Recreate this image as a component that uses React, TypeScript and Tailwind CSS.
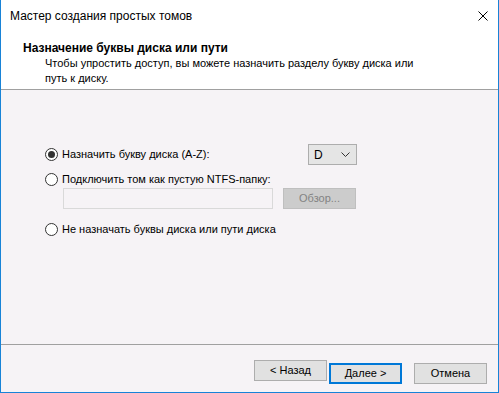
const font = { fontFamily: '"Segoe UI", "Liberation Sans", Arial, sans-serif' }

const Radio = ({ checked, label }: { checked?: boolean; label: string }) => (
  <div className="flex items-center h-[16px]">
    <span className="w-[13px] h-[13px] rounded-full border border-[#333] bg-white flex items-center justify-center">
      {checked && <span className="w-[7px] h-[7px] rounded-full bg-[#333]" />}
    </span>
    <span className="ml-[4px] text-[11px] text-black leading-none">{label}</span>
  </div>
)

const Button = ({ label, primary }: { label: string; primary?: boolean }) => (
  <button
    className={`w-[73px] h-[21px] bg-[#e1e1e1] text-[11px] text-black leading-none ${
      primary ? 'border-2 border-[#0078d7]' : 'border border-[#adadad]'
    }`}
  >
    {label}
  </button>
)

export default function App() {
  return (
    <div
      className="w-[499px] h-[393px] flex flex-col border-x border-b border-[#1883d7] bg-[#f6f3f6] overflow-hidden"
      style={font}
    >
      <div className="bg-white h-[90px] border-b border-[#a0a0a0] flex flex-col">
        <div className="h-[31px] flex items-center justify-between pl-[9px] pr-[9px]">
          <span className="text-[12px] text-black">Мастер создания простых томов</span>
          <svg width="10" height="10" viewBox="0 0 10 10" className="mr-[1px]">
            <path d="M0.5 0.5 L9.5 9.5 M9.5 0.5 L0.5 9.5" stroke="#000" strokeWidth="1" />
          </svg>
        </div>
        <div className="pl-[22px] mt-[10px] text-[12px] font-bold text-black leading-[14px]">
          Назначение буквы диска или пути
        </div>
        <div className="pl-[44px] mt-[1px] text-[11px] text-black leading-[15px]">
          Чтобы упростить доступ, вы можете назначить разделу букву диска или
          <br />
          путь к диску.
        </div>
      </div>

      <div className="flex-1 border-b border-[#a0a0a0] pl-[44px] pt-[54px]">
        <div className="flex items-center">
          <div className="w-[263px]">
            <Radio checked label="Назначить букву диска (A-Z):" />
          </div>
          <div className="w-[49px] h-[21px] border border-[#adadad] bg-[#e5e5e5] flex items-center justify-between pl-[5px] pr-[6px]">
            <span className="text-[12px] text-black leading-none">D</span>
            <svg width="9" height="5" viewBox="0 0 9 5">
              <path d="M0.5 0.5 L4.5 4.5 L8.5 0.5" fill="none" stroke="#333" strokeWidth="1" />
            </svg>
          </div>
        </div>
        <div className="mt-[6px]">
          <Radio label="Подключить том как пустую NTFS-папку:" />
        </div>
        <div className="mt-[1px] ml-[18px] flex items-center">
          <div className="w-[210px] h-[21px] border border-[#d9d9d9] bg-[#f6f3f6]" />
          <div className="ml-[10px] w-[73px] h-[21px] border border-[#bfbfbf] bg-[#cccccc] flex items-center justify-center text-[11px] text-[#838383] leading-none">
            Обзор...
          </div>
        </div>
        <div className="mt-[12px]">
          <Radio label="Не назначать буквы диска или пути диска" />
        </div>
      </div>

      <div className="h-[47px] flex items-start justify-end pt-[15px] pr-[11px]">
        <Button label="< Назад" />
        <div className="ml-[2px]">
          <Button primary label="Далее >" />
        </div>
        <div className="ml-[12px]">
          <Button label="Отмена" />
        </div>
      </div>
    </div>
  )
}
